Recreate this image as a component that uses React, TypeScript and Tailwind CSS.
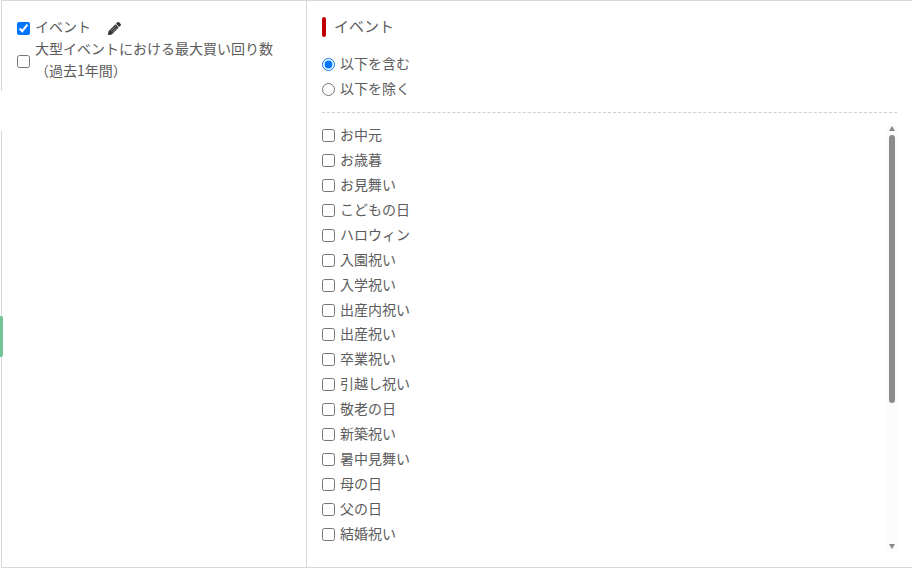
const events = [
  "お中元",
  "お歳暮",
  "お見舞い",
  "こどもの日",
  "ハロウィン",
  "入園祝い",
  "入学祝い",
  "出産内祝い",
  "出産祝い",
  "卒業祝い",
  "引越し祝い",
  "敬老の日",
  "新築祝い",
  "暑中見舞い",
  "母の日",
  "父の日",
  "結婚祝い",
];

const font = { fontFamily: '"Noto Sans CJK JP", "Liberation Sans", sans-serif' };

function Pencil() {
  return (
    <svg viewBox="0 0 512 512" className="h-[13px] w-[13px]" fill="#333">
      <path d="M497.9 142.1l-46.1 46.1c-4.7 4.7-12.3 4.7-17 0l-111-111c-4.7-4.7-4.7-12.3 0-17l46.1-46.1c18.7-18.7 49.1-18.7 67.9 0l60.1 60.1c18.8 18.7 18.8 49.1 0 67.9zM284.2 99.8L21.6 362.4.4 483.9c-2.9 16.4 11.4 30.6 27.8 27.8l121.5-21.3 262.6-262.6c4.7-4.7 4.7-12.3 0-17l-111-111c-4.8-4.7-12.4-4.7-17.1 0z" />
      <path d="M110 360L300 170M165 415L355 225" stroke="#fff" strokeWidth="18" fill="none" />
    </svg>
  );
}

function Scrollbar() {
  return (
    <div className="mt-[-1px] flex h-[430px] w-[10px] shrink-0 flex-col items-center bg-[#fbfbfb]">
      <svg viewBox="0 0 6 5" className="mt-[4px] h-[5px] w-[6px]" fill="#888">
        <path d="M3 0L6 5H0Z" />
      </svg>
      <div className="mt-[4px] h-[268px] w-[6px] rounded-[3px] bg-[#8c8c8c]" />
      <div className="flex-1" />
      <svg viewBox="0 0 6 5" className="mb-[3px] h-[5px] w-[6px]" fill="#888">
        <path d="M0 0H6L3 5Z" />
      </svg>
    </div>
  );
}

export default function App() {
  return (
    <div className="relative h-[568px] w-[912px] overflow-hidden bg-white text-[14px] text-[#5c5c5c]" style={font}>
      <div className="ml-px flex h-full border border-r-0 border-[#d8d8d8]">
        {/* left tree */}
        <div className="w-[305px] shrink-0 border-r border-[#d8d8d8] pl-[15px] pt-[15px]">
          <label className="flex h-[24px] items-center">
            <input type="checkbox" defaultChecked className="m-0 h-[13px] w-[13px]" />
            <span className="ml-[5px] -mt-[4px] leading-[24px]">イベント</span>
            <span className="ml-[17px]">
              <Pencil />
            </span>
          </label>
          <label className="mt-[1px] flex items-center">
            <input type="checkbox" className="m-0 h-[13px] w-[13px] shrink-0" />
            <span className="ml-[5px] -mt-[4px] leading-[22px]">
              大型イベントにおける最大買い回り数
              <br />
              （過去1年間）
            </span>
          </label>
        </div>

        {/* right panel */}
        <div className="min-w-0 flex-1 pl-[15px] pr-[15px] pt-[16px]">
          <div className="flex h-[20px] items-center">
            <span className="h-[20px] w-[4px] rounded-[2px] bg-[#c00000]" />
            <span className="ml-[8px] -mt-[3px] text-[15px] leading-[20px]">イベント</span>
          </div>
          <div className="mt-[14px] border-b border-dashed border-[#cfcfcf] pb-[11px]">
            <label className="flex h-[25px] items-center">
              <input type="radio" name="mode" defaultChecked className="m-0 mt-[2px] h-[13px] w-[13px]" />
              <span className="ml-[5px]">以下を含む</span>
            </label>
            <label className="flex h-[25px] items-center">
              <input type="radio" name="mode" className="m-0 mt-[2px] h-[13px] w-[13px]" />
              <span className="ml-[5px]">以下を除く</span>
            </label>
          </div>
          <div className="mt-[10px] flex justify-between">
            <ul>
              {events.map((name) => (
                <li key={name} className="h-[24.94px]">
                  <label className="flex h-full items-center">
                    <input type="checkbox" className="m-0 h-[13px] w-[13px]" />
                    <span className="ml-[5px] -mt-[2px]">{name}</span>
                  </label>
                </li>
              ))}
            </ul>
            <Scrollbar />
          </div>
        </div>
      </div>

      {/* left edge overlays */}
      <div className="absolute left-0 top-[91px] h-[40px] w-[3px] bg-white" />
      <div className="absolute left-0 top-[316px] h-[41px] w-[3px] rounded-r-[2px] bg-[#74c496]" />
    </div>
  );
}
